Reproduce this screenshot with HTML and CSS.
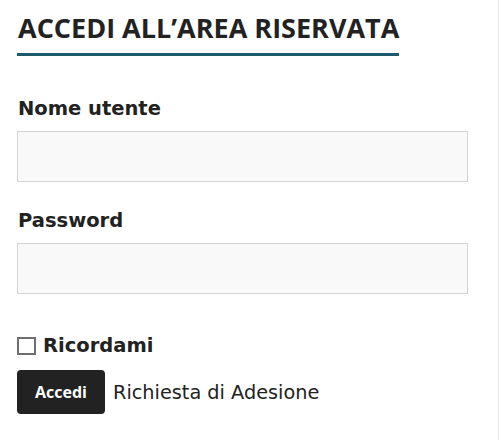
FILE: index.html
```html
<!DOCTYPE html>
<html lang="it">
<head>
<meta charset="utf-8">
<title>Accedi all'area riservata</title>
<link rel="stylesheet" href="styles.css">
</head>
<body>
<div class="page">
  <section class="login">
    <h2 class="title"><span class="title-text">ACCEDI ALL’AREA RISERVATA</span></h2>
    <form class="form">
      <div class="field">
        <label class="label" for="user">Nome utente</label>
        <input class="input" id="user" type="text">
      </div>
      <div class="field">
        <label class="label" for="pass">Password</label>
        <input class="input" id="pass" type="password">
      </div>
      <label class="remember"><span class="check"></span><span class="remember-text">Ricordami</span></label>
      <div class="actions">
        <button class="btn" type="button">Accedi</button>
        <a class="link">Richiesta di Adesione</a>
      </div>
    </form>
  </section>
</div>
</body>
</html>
```
FILE: styles.css
```css
html, body {
  margin: 0;
  padding: 0;
  background: #fff;
}
.page {
  box-sizing: border-box;
  min-height: 440px;
  border-right: 1px solid #e8e8e8;
  padding: 9px 17px 0 17px;
  color: #222;
}
.title {
  margin: 0;
  font-family: "Open Sans", sans-serif;
  font-weight: 700;
  font-size: 27px;
  line-height: 37px;
}
.title-text {
  display: inline-block;
  padding: 0 0 7px 1px;
  border-bottom: 3px solid #1c5a6e;
  color: #222;
}
.form {
  display: flex;
  flex-direction: column;
  margin-top: 40px;
}
.field {
  display: flex;
  flex-direction: column;
  gap: 10px;
  margin-bottom: 26px;
}
.label {
  font-family: "DejaVu Sans", Verdana, sans-serif;
  font-weight: 700;
  font-size: 19.5px;
  line-height: 25px;
  padding-left: 1px;
}
.input {
  box-sizing: border-box;
  width: 451px;
  height: 51px;
  margin: 0;
  border: 1px solid #d3d3d3;
  background: #f9f9f9;
  font-size: 16px;
}
.remember {
  display: flex;
  align-items: center;
  gap: 7px;
  margin-top: 13px;
  font-family: "DejaVu Sans", Verdana, sans-serif;
  font-weight: 700;
  font-size: 19.5px;
  line-height: 25px;
}
.check {
  box-sizing: border-box;
  width: 19px;
  height: 18px;
  border: 2px solid #6e6e6e;
  background: #fff;
}
.actions {
  display: flex;
  align-items: center;
  gap: 8px;
  margin-top: 12px;
}
.btn {
  box-sizing: border-box;
  width: 88px;
  height: 44px;
  border: 0;
  border-radius: 4px;
  background: #222;
  color: #fff;
  font-family: "Open Sans", sans-serif;
  font-weight: 700;
  font-size: 16px;
  padding: 0;
}
.link {
  font-family: "DejaVu Sans", Verdana, sans-serif;
  font-size: 19.3px;
  color: #222;
}
```
